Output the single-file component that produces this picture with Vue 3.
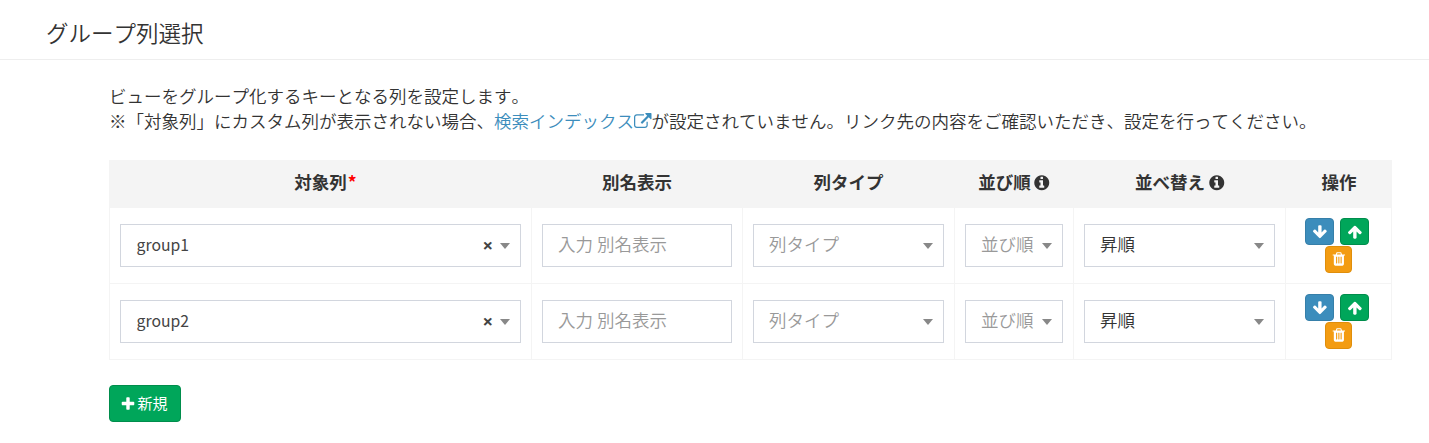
<script setup>
const icons = {
  plus: 'M1600 736v192q0 40-28 68t-68 28h-416v416q0 40-28 68t-68 28h-192q-40 0-68-28t-28-68v-416h-416q-40 0-68-28t-28-68v-192q0-40 28-68t68-28h416v-416q0-40 28-68t68-28h192q40 0 68 28t28 68v416h416q40 0 68 28t28 68z',
  down: 'M1675 832q0 53-37 90l-651 652q-39 37-91 37-53 0-90-37l-651-652q-38-36-38-90 0-53 38-91l74-75q39-37 91-37 53 0 90 37l294 294v-704q0-52 38-90t90-38h128q52 0 90 38t38 90v704l294-294q37-37 90-37 52 0 91 37l75 75q37 39 37 91z',
  up: 'M1675 971q0 51-37 90l-75 75q-38 38-91 38-54 0-90-38l-294-293v704q0 52-37.5 84.5t-90.5 32.5h-128q-53 0-90.5-32.5t-37.5-84.5v-704l-294 293q-36 38-90 38t-90-38l-75-75q-38-38-38-90 0-53 38-91l651-651q35-37 90-37 54 0 91 37l651 651q37 39 37 91z',
  trash: 'M704 1376v-704q0-14-9-23t-23-9h-64q-14 0-23 9t-9 23v704q0 14 9 23t23 9h64q14 0 23-9t9-23zm256 0v-704q0-14-9-23t-23-9h-64q-14 0-23 9t-9 23v704q0 14 9 23t23 9h64q14 0 23-9t9-23zm256 0v-704q0-14-9-23t-23-9h-64q-14 0-23 9t-9 23v704q0 14 9 23t23 9h64q14 0 23-9t9-23zm-544-992h448l-48-117q-7-9-17-11h-317q-10 2-17 11zm928 32v64q0 14-9 23t-23 9h-96v948q0 83-47 143.5t-113 60.5h-832q-66 0-113-58.5t-47-141.5v-952h-96q-14 0-23-9t-9-23v-64q0-14 9-23t23-9h309l70-167q15-37 54-63t79-26h320q40 0 79 26t54 63l70 167h309q14 0 23 9t9 23z',
  info: 'M1152 1376v-160q0-14-9-23t-23-9h-96v-512q0-14-9-23t-23-9h-320q-14 0-23 9t-9 23v160q0 14 9 23t23 9h96v320h-96q-14 0-23 9t-9 23v160q0 14 9 23t23 9h448q14 0 23-9t9-23zm-128-896v-160q0-14-9-23t-23-9h-192q-14 0-23 9t-9 23v160q0 14 9 23t23 9h192q14 0 23-9t9-23zm640 416q0 209-103 385.5t-279.5 279.5-385.5 103-385.5-103-279.5-279.5-103-385.5 103-385.5 279.5-279.5 385.5-103 385.5 103 279.5 279.5 103 385.5z',
  external: 'M1408 928v320q0 119-84.5 203.5t-203.5 84.5h-832q-119 0-203.5-84.5t-84.5-203.5v-832q0-119 84.5-203.5t203.5-84.5h704q14 0 23 9t9 23v64q0 14-9 23t-23 9h-704q-66 0-113 47t-47 113v832q0 66 47 113t113 47h832q66 0 113-47t47-113v-320q0-14 9-23t23-9h64q14 0 23 9t9 23zm384-864v512q0 26-19 45t-45 19-45-19l-176-176-652 652q-10 10-23 10t-23-10l-114-114q-10-10-10-23t10-23l652-652-176-176q-19-19-19-45t19-45 45-19h512q26 0 45 19t19 45z',
}

const columns = [
  { label: '対象列', required: true },
  { label: '別名表示' },
  { label: '列タイプ' },
  { label: '並び順', info: true },
  { label: '並べ替え', info: true },
  { label: '操作' },
]

const rows = ['group1', 'group2']
</script>

<template>
  <section class="panel">
    <header class="title"><h3>グループ列選択</h3></header>
    <div class="body">
      <p class="help">
        ビューをグループ化するキーとなる列を設定します。<br />※「対象列」にカスタム列が表示されない場合、<a class="link">検索インデックス<svg class="ext" viewBox="0 0 1792 1792"><path :d="icons.external" /></svg></a>が設定されていません。リンク先の内容をご確認いただき、設定を行ってください。
      </p>
      <div class="table">
        <div class="row head">
          <div v-for="c in columns" :key="c.label" class="th" :class="{ required: c.required }">
            <span>{{ c.label }}</span>
            <span v-if="c.required" class="req">*</span>
            <svg v-if="c.info" class="info" viewBox="0 0 1792 1792"><path :d="icons.info" /></svg>
          </div>
        </div>
        <div v-for="r in rows" :key="r" class="row">
          <div class="td">
            <div class="field">
              <span class="value latin">{{ r }}</span>
              <span class="clear">×</span>
              <i class="caret"></i>
            </div>
          </div>
          <div class="td"><div class="field"><span class="value hint">入力 別名表示</span></div></div>
          <div class="td"><div class="field"><span class="value hint">列タイプ</span><i class="caret"></i></div></div>
          <div class="td"><div class="field"><span class="value hint">並び順</span><i class="caret"></i></div></div>
          <div class="td"><div class="field"><span class="value">昇順</span><i class="caret"></i></div></div>
          <div class="td actions">
            <button class="btn blue"><svg viewBox="0 0 1792 1792"><path :d="icons.down" /></svg></button>
            <button class="btn green"><svg viewBox="0 0 1792 1792"><path :d="icons.up" /></svg></button>
            <button class="btn orange"><svg viewBox="0 0 1792 1792"><path :d="icons.trash" /></svg></button>
          </div>
        </div>
      </div>
      <button class="add"><svg viewBox="0 0 1792 1792"><path :d="icons.plus" /></svg><span>新規</span></button>
    </div>
  </section>
</template>

<style>
body { margin: 0; background: #fff; }
</style>

<style scoped>
.panel {
  height: 443px;
  overflow: hidden;
  box-sizing: border-box;
  color: #333;
  font-family: "Noto Sans CJK JP", sans-serif;
  font-size: 17.5px;
  line-height: 25px;
  font-kerning: none;
  text-spacing-trim: space-all;
}
svg { fill: currentColor; display: block; }
.title {
  box-sizing: border-box;
  height: 60px;
  padding: 17px 0 0 46px;
  border-bottom: 1px solid #eee;
}
h3 { margin: 0; font-size: 22.5px; font-weight: 350; line-height: 31px; }
.body { padding: 23px 37px 0 109px; }
.help { margin: 0; height: 77px; white-space: nowrap; font-weight: 350; }
.link { color: #3c8dbc; }
.ext { display: inline-block; width: 17.5px; height: 17.5px; vertical-align: -2px; }
.table { width: 1283px; }
.row {
  display: grid;
  grid-template-columns: 422px 211px 212px 119px 212px 107px;
  box-sizing: border-box;
  height: 76px;
  border-bottom: 1px solid #f4f4f4;
}
.head { height: 48px; background: #f4f4f4; font-weight: 700; }
.th {
  display: flex;
  justify-content: center;
  padding: 9px 0 0 1px;
}
.required { padding-left: 11px; }
.req { color: #f00; margin-left: 1px; }
.info { width: 17.5px; height: 17.5px; margin: 5px -1px 0 2.5px; }
.td {
  box-sizing: border-box;
  border-left: 1px solid #f4f4f4;
  padding: 16px 10px 0;
}
.td:last-child { border-right: 1px solid #f4f4f4; }
.field {
  display: flex;
  align-items: center;
  box-sizing: border-box;
  height: 43px;
  padding: 0 10px 0 15px;
  border: 1px solid #d2d6de;
  background: #fff;
}
.value { flex: 1; white-space: nowrap; font-weight: 350; margin-top: -4px; }
.latin { font-size: 15.75px; font-weight: 400; color: #444; margin: -2px 0 0 .5px; }
.hint { color: #999; }
.clear {
  color: #444;
  font-family: "Noto Sans", sans-serif;
  font-weight: 700;
  font-size: 18.5px;
  margin-right: 7px;
  margin-top: -2px;
}
.caret {
  border: 5px solid transparent;
  border-top: 6px solid #888;
  border-bottom: 0;
  margin-top: 1px;
}
.actions {
  display: flex;
  flex-wrap: wrap;
  justify-content: center;
  align-content: flex-start;
  gap: 1px 6px;
  padding: 10px 12px 0 8px;
}
.btn {
  display: flex;
  align-items: center;
  justify-content: center;
  box-sizing: border-box;
  width: 29px;
  height: 27px;
  padding: 0 0 0 1px;
  color: #fff;
  border: 1px solid;
  border-radius: 4px;
}
.btn svg { width: 15.75px; height: 15.75px; }
.blue { background: #3c8dbc; border-color: #367fa9; }
.green { background: #00a65a; border-color: #008d4c; }
.orange { background: #f39c12; border-color: #e08e0b; width: 27px; margin-left: 3px; padding-bottom: 2px; }
.add {
  display: flex;
  align-items: center;
  justify-content: center;
  box-sizing: border-box;
  width: 72px;
  height: 37px;
  margin-top: 25px;
  padding: 0 2px 0 0;
  gap: 1px;
  color: #fff;
  background: #00a65a;
  border: 1px solid #008d4c;
  border-radius: 4px;
  font-family: inherit;
  font-size: 15px;
  line-height: 20px;
}
.add svg { width: 16px; height: 16px; }
.add span { margin-top: -1px; }
</style>
